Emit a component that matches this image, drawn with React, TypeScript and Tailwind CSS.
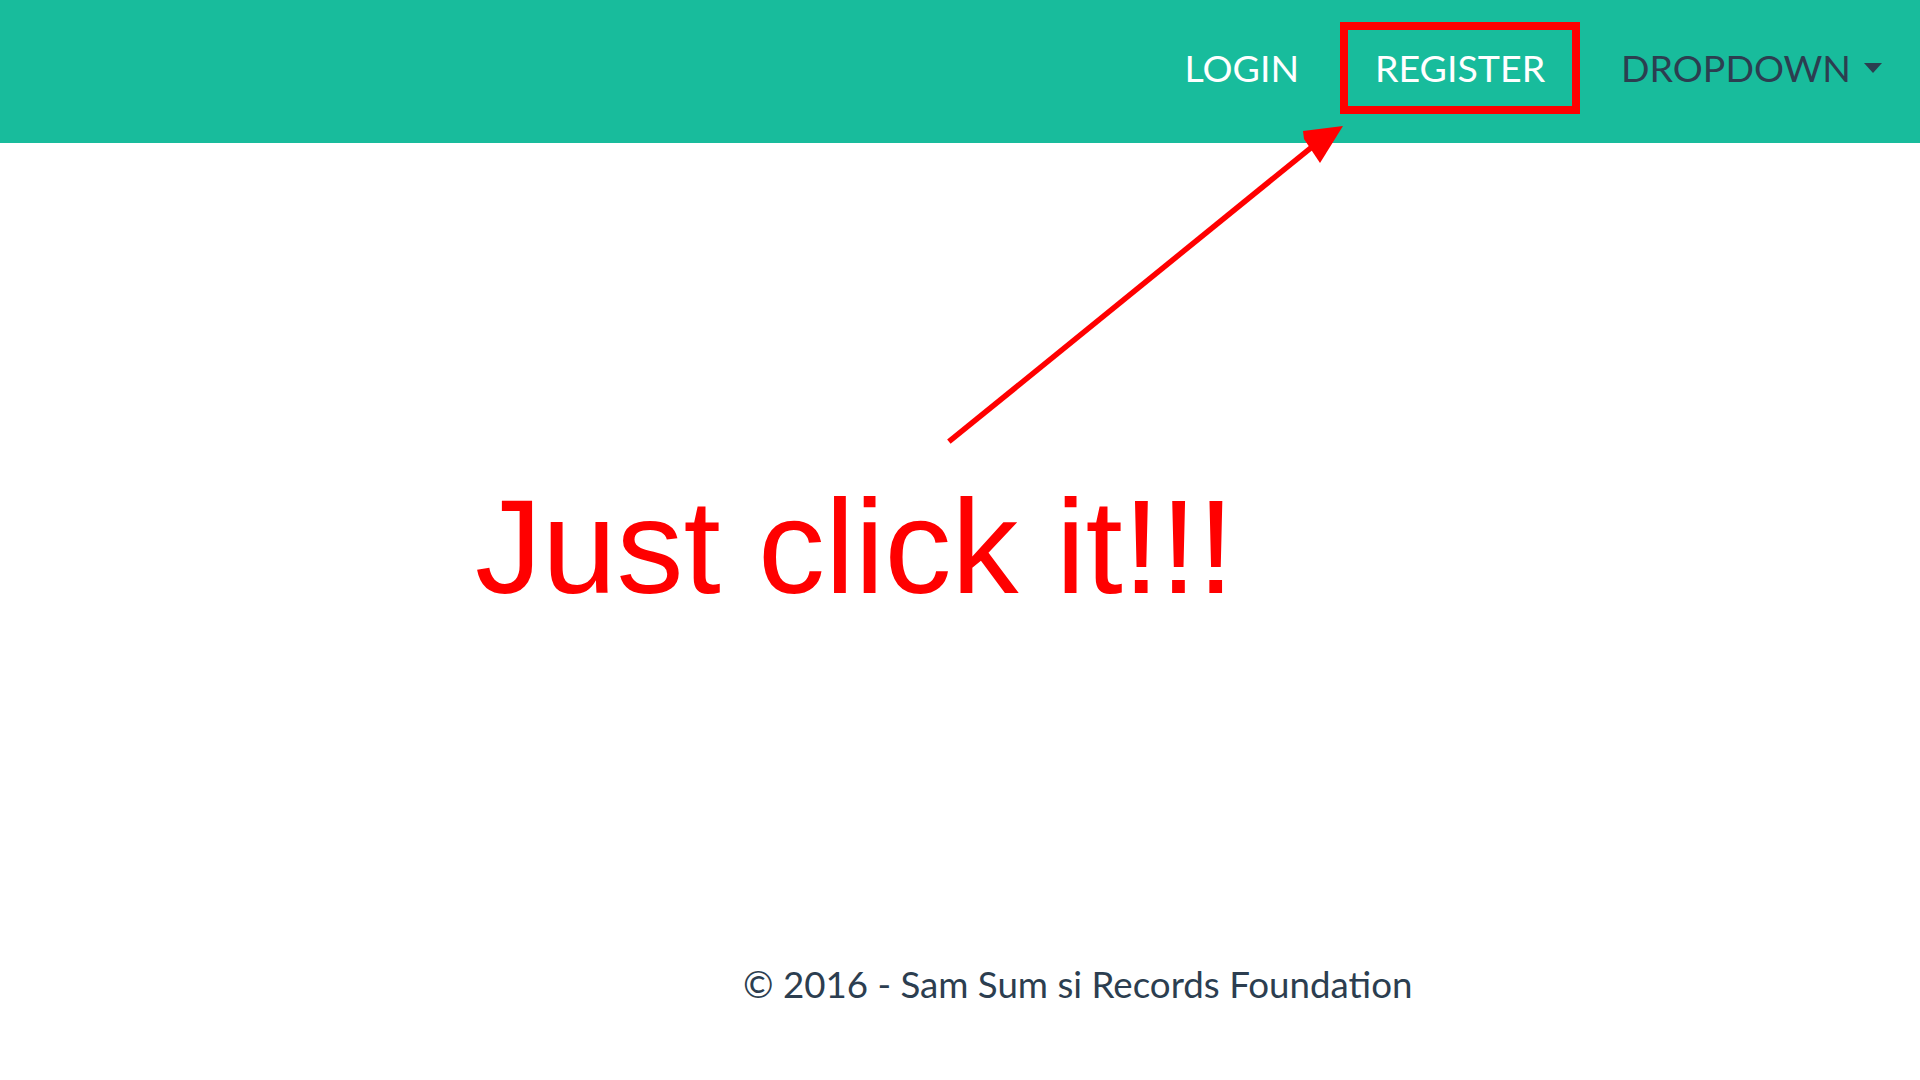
import React from "react";

export default function App() {
  return (
    <div className="relative w-full h-[1080px] bg-white font-['Lato',sans-serif] overflow-hidden">
      <nav className="h-[143px] bg-[#18bc9c] flex justify-end items-start pt-[22px] pr-[38px]">
        <a className="h-[92px] flex items-center text-[37.5px] leading-none text-white mr-[41px]">LOGIN</a>
        <a className="w-[240px] h-[92px] border-[8px] border-[#ff0000] flex items-center justify-center text-[37.5px] leading-none text-white">
          REGISTER
        </a>
        <a className="h-[92px] flex items-center text-[37.5px] leading-none text-[#2c3e50] ml-[41px]">
          DROPDOWN
          <span className="ml-[13px] inline-block w-0 h-0 border-t-[10px] border-t-[#2c3e50] border-x-[9.5px] border-x-transparent" />
        </a>
      </nav>
      <main className="pt-[337px] pl-[475px]">
        <div className="font-['Liberation_Sans',Arial,sans-serif] text-[134px] leading-none text-[#ff0000]">
          Just click it!!!
        </div>
      </main>
      <footer className="mt-[352px] pl-[743px] text-[36.7px] leading-none text-[#2c3e50]">
        © 2016 - Sam Sum si Records Foundation
      </footer>
      <svg
        className="absolute left-0 top-0 pointer-events-none"
        width="1920"
        height="1080"
        viewBox="0 0 1920 1080"
      >
        <line x1="951" y1="440" x2="1318" y2="142" stroke="#ff0000" strokeWidth="5.5" strokeLinecap="square" />
        <polygon points="1343,126 1303,131 1304,139 1320,163" fill="#ff0000" />
      </svg>
    </div>
  );
}
